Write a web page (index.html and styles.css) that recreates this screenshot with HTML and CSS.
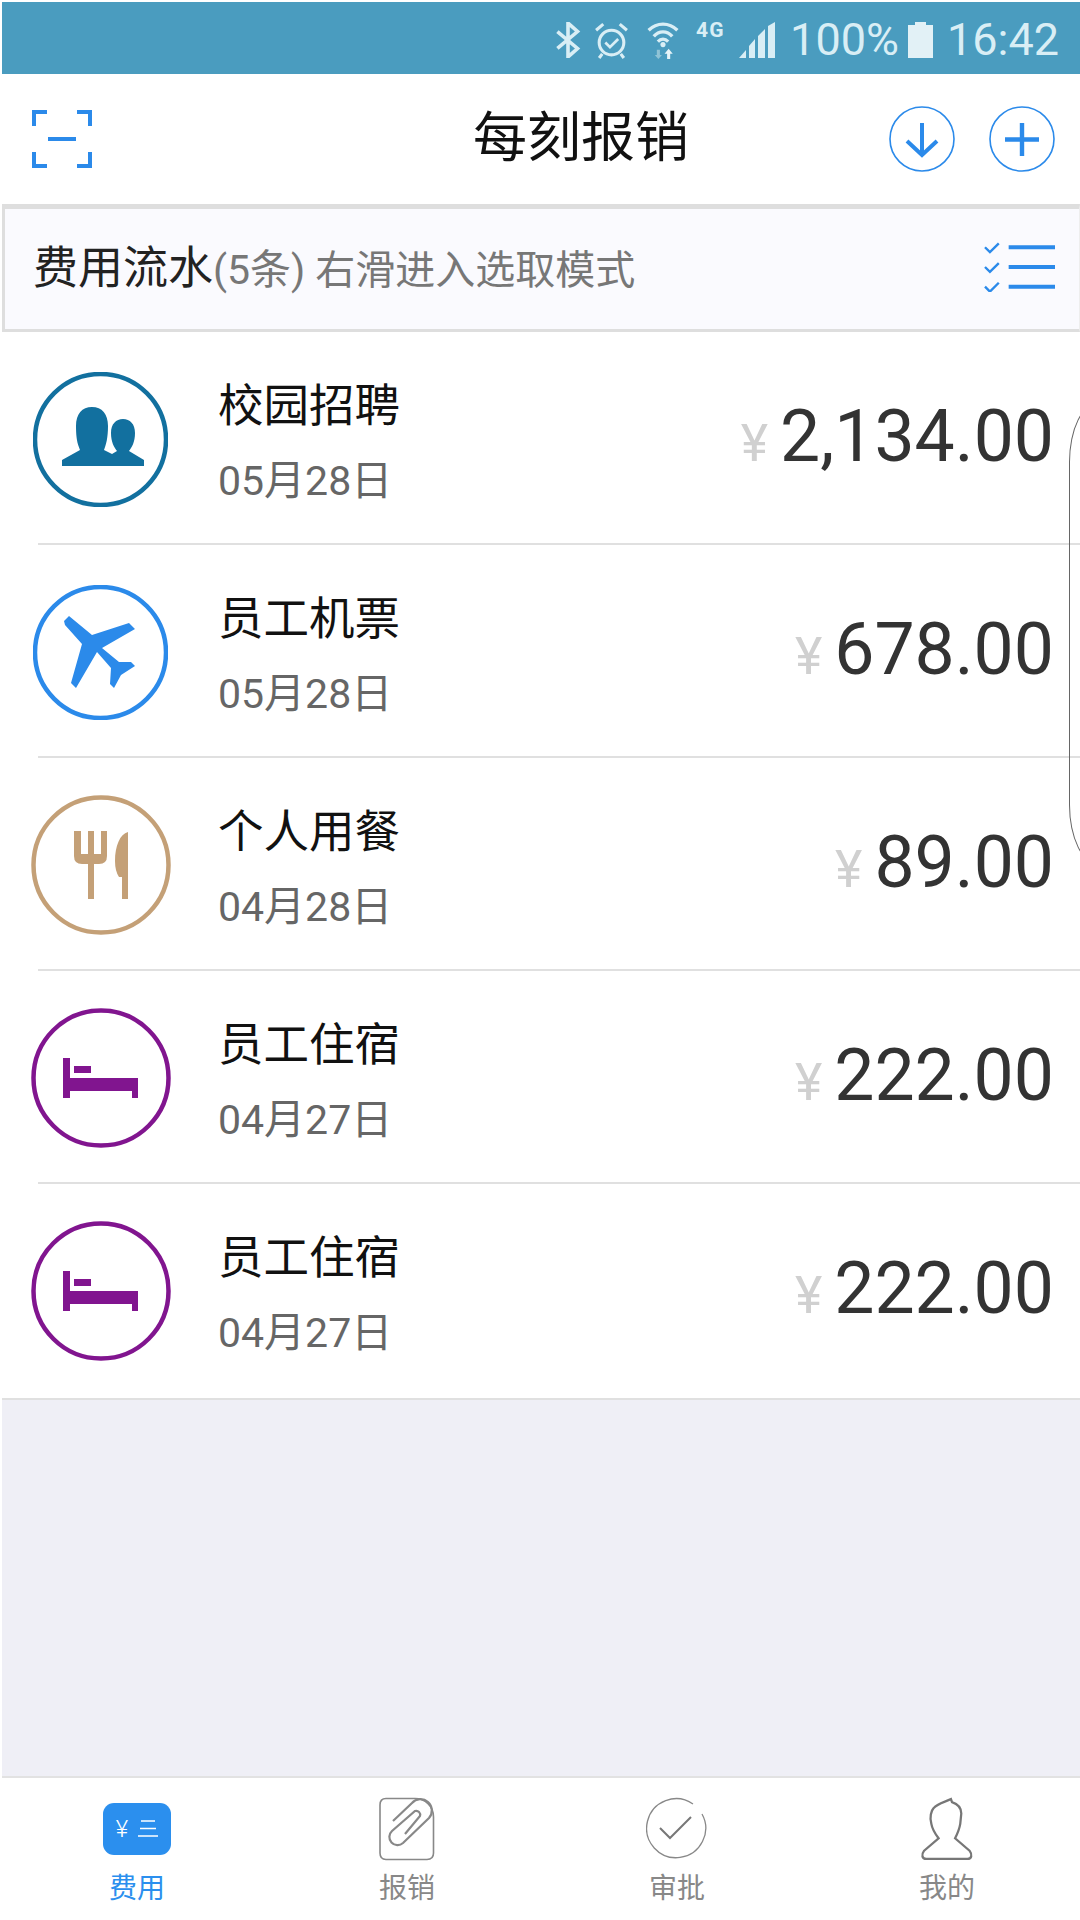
FILE: index.html
```html
<!DOCTYPE html>
<html lang="zh-CN">
<head>
<meta charset="utf-8">
<title>每刻报销</title>
<link rel="stylesheet" href="styles.css">
</head>
<body>
<div class="screen">
  <header class="status">
    <svg class="st-bt" viewBox="0 0 24 34"><path d="M2 9 21 25 12 33V1L21 9 2 25" fill="none" stroke="#d9eef5" stroke-width="3.4"/></svg>
    <svg class="st-alarm" viewBox="0 0 32 36"><circle cx="16" cy="20" r="12" fill="none" stroke="#d9eef5" stroke-width="3"/><path d="M10 20l4.500 4.500 8-8" fill="none" stroke="#d9eef5" stroke-width="2.600"/><path d="M1 8 8 2M31 8 24 2M7 31l-3 4M25 31l3 4" stroke="#d9eef5" stroke-width="3" fill="none"/></svg>
    <svg class="st-wifi" viewBox="0 0 30 37"><path d="M1 9C9 1 21 1 29 9M6 15C11 9 19 9 24 15M10 20C13 17 17 17 20 20" fill="none" stroke="#d9eef5" stroke-width="3.200"/><circle cx="15" cy="23" r="2.500" fill="#d9eef5"/><path d="M9 28h3v5h2l-3.500 4-3.500-4h2z" fill="#8fc3d6"/><path d="M19 37v-5h-2.500l4-5 4 5H22v5z" fill="#e6f4f8"/></svg>
    <span class="st-net">4G</span>
    <svg class="st-signal" viewBox="0 0 37 36"><path d="M0 36 7 28V36zM10 36V24L16 17V36zM19 36V14L26 7V36zM29 36V4L36 0V36z" fill="#d9eef5"/></svg>
    <span class="st-text st-pct">100%</span>
    <svg class="st-batt" viewBox="0 0 25 36"><path d="M7 0H18V3H25V36H0V3H7z" fill="#e2f1f6"/></svg>
    <span class="st-text st-time">16:42</span>
  </header>

  <nav class="navbar">
    <svg class="scan" viewBox="0 0 60 58"><path d="M15 2H2V16M45 2H58V16M15 56H2V42M45 56H58V42" fill="none" stroke="#2b8aea" stroke-width="4"/><path d="M16 29H44" stroke="#2b8aea" stroke-width="4"/></svg>
    <h1 class="nav-title">每刻报销</h1>
    <div class="nav-actions">
      <svg class="round-btn" viewBox="0 0 66 66"><circle cx="33" cy="33" r="32" fill="none" stroke="#2b8aea" stroke-width="1.600"/><path d="M33 17V48M18 35 33 49 48 35" fill="none" stroke="#2b8aea" stroke-width="4"/></svg>
      <svg class="round-btn" viewBox="0 0 66 66"><circle cx="33" cy="33" r="32" fill="none" stroke="#2b8aea" stroke-width="1.600"/><path d="M33 17V50M16 33.500H50" fill="none" stroke="#2b8aea" stroke-width="4.400"/></svg>
    </div>
  </nav>

  <section class="section-head">
    <p class="section-text"><span class="section-name">费用流水</span><span class="section-count">(5条)</span> 右滑进入选取模式</p>
    <svg class="check-list" viewBox="0 0 72 52"><path d="M1 7l5 5 9-9M1 27l5 5 9-9M1 47l5 5 9-9" fill="none" stroke="#2b8aea" stroke-width="2.400"/><path d="M25 7H72M25 27H72M25 47H72" stroke="#2b8aea" stroke-width="4"/></svg>
  </section>

  <main class="list">
    <article class="row">
      <div class="icon-cell"><svg class="cat cat-sm" viewBox="0 0 135 135"><circle cx="67.500" cy="67.500" r="65.500" fill="none" stroke="#12709f" stroke-width="4.500"/><path fill="#12709f" d="M29 94V88L47 78C46 74 43 71 43 54 43 42 49 35 59 35 69 35 75 42 75 54 75 66 73 73 71 78L79 82 84 79C81 75 78 70 78 61 78 52 83 47 90 47 97 47 102 52 102 61 102 70 99 75 96 79L111 88V94Z"/></svg></div>
      <div class="info"><div class="item-title">校园招聘</div><div class="item-date">05月28日</div></div>
      <div class="amount"><span class="yen">¥</span><span class="num">2,134.00</span></div>
    </article>
    <div class="divider"></div>
    <article class="row">
      <div class="icon-cell"><svg class="cat cat-sm" viewBox="0 0 135 135"><circle cx="67.500" cy="67.500" r="65.500" fill="none" stroke="#2b8aea" stroke-width="4.500"/><path fill="#2b8aea" d="M31 36 36 31 59 50 96 38 102 44 69 63 86 77H98L102 81 88 90 81 103 77 99 78 83 64 67 43 103 38 98 49 59 32 40Z"/></svg></div>
      <div class="info"><div class="item-title">员工机票</div><div class="item-date">05月28日</div></div>
      <div class="amount"><span class="yen">¥</span><span class="num">678.00</span></div>
    </article>
    <div class="divider"></div>
    <article class="row">
      <div class="icon-cell"><svg class="cat" viewBox="0 0 140 140"><circle cx="70" cy="70" r="67.500" fill="none" stroke="#c4a077" stroke-width="4.500"/><path fill="#c4a077" d="M43 36H50V59H57V36H63V59H70V36H76V61Q76 69 68 69H63V104H57V69H51Q43 69 43 61ZM97 37V104H91V82H88Q84 76 84 66C84 51 89 39 97 37Z"/></svg></div>
      <div class="info"><div class="item-title">个人用餐</div><div class="item-date">04月28日</div></div>
      <div class="amount"><span class="yen">¥</span><span class="num">89.00</span></div>
    </article>
    <div class="divider"></div>
    <article class="row">
      <div class="icon-cell"><svg class="cat" viewBox="0 0 140 140"><circle cx="70" cy="70" r="67.500" fill="none" stroke="#81158f" stroke-width="4.500"/><path fill="#81158f" d="M32 50H39V70H107V90H101V83H39V90H32ZM43 58H60V65H43Z"/></svg></div>
      <div class="info"><div class="item-title">员工住宿</div><div class="item-date">04月27日</div></div>
      <div class="amount"><span class="yen">¥</span><span class="num">222.00</span></div>
    </article>
    <div class="divider"></div>
    <article class="row">
      <div class="icon-cell"><svg class="cat" viewBox="0 0 140 140"><circle cx="70" cy="70" r="67.500" fill="none" stroke="#81158f" stroke-width="4.500"/><path fill="#81158f" d="M32 50H39V70H107V90H101V83H39V90H32ZM43 58H60V65H43Z"/></svg></div>
      <div class="info"><div class="item-title">员工住宿</div><div class="item-date">04月27日</div></div>
      <div class="amount"><span class="yen">¥</span><span class="num">222.00</span></div>
    </article>
    <div class="list-end"></div>
    <div class="edge-handle"></div>
  </main>

  <div class="empty"></div>

  <footer class="tabbar">
    <div class="tab tab-active">
      <div class="tab-icon"><div class="money-badge"><span class="money-yen">¥</span><svg class="money-lines" viewBox="0 0 20 20"><path d="M3 2H17M2 9.500H18M0 17H20" stroke="#fff" stroke-width="1.400"/></svg></div></div>
      <div class="tab-label">费用</div>
    </div>
    <div class="tab">
      <div class="tab-icon"><svg class="tab-svg" viewBox="0 0 56 64"><path d="M7 1.500H36C46 1.500 54.500 9 54.500 20V56Q54.500 62.500 48 62.500H7Q1 62.500 1 56V8Q1 1.500 7 1.500Z" fill="none" stroke="#888" stroke-width="1.600"/><path d="M14 24 33 6A11 11 0 0 1 50 21L24 46A8 8 0 0 1 13 34L36 14A4 4 0 0 1 41 19L26 37" fill="none" stroke="#888" stroke-width="2.200"/></svg></div>
      <div class="tab-label">报销</div>
    </div>
    <div class="tab">
      <div class="tab-icon"><svg class="tab-svg" viewBox="0 0 62 64"><path d="M56 17A29.500 29.500 0 1 1 47 7" fill="none" stroke="#888" stroke-width="1.300"/><path d="M14 31 24 41 45 20" fill="none" stroke="#777" stroke-width="2"/></svg></div>
      <div class="tab-label">审批</div>
    </div>
    <div class="tab">
      <div class="tab-icon"><svg class="tab-svg" viewBox="0 0 52 62"><path d="M30 2 31 5C37 7 40 10 40 16L39 26C38 32 36 36 34 40L48 52C51 56 50 60 46 60H6C2 60 1 56 4 52L18 40C15 36 12 32 11 26 9 20 11 13 13 11 17 6 24 5 30 2Z" fill="none" stroke="#777" stroke-width="2.200"/></svg></div>
      <div class="tab-label">我的</div>
    </div>
  </footer>
</div>
</body>
</html>
```
FILE: styles.css
```css
* { box-sizing: border-box; }
html, body { margin: 0; padding: 0; background: #fff; }
body {
  width: 1080px;
  height: 1920px;
  overflow: hidden;
  font-family: Roboto, "Noto Sans CJK SC", sans-serif;
}
.screen {
  display: flex;
  flex-direction: column;
  height: 1920px;
  padding: 2px 0 0 2px;
}

/* status bar */
.status {
  flex: none;
  height: 72px;
  background: #4a9cbf;
  display: flex;
  align-items: center;
  justify-content: flex-end;
  padding: 4px 21px 0 0;
  color: #d9eef5;
}
.st-bt { width: 26px; height: 36px; }
.st-alarm { width: 33px; height: 37px; margin-left: 14px; }
.st-wifi { width: 32px; height: 38px; margin-left: 19px; }
.st-net { font-size: 21px; font-weight: 700; letter-spacing: 1px; margin: -20px 0 0 17px; width: 31px; white-space: nowrap; }
.st-signal { width: 37px; height: 36px; margin-left: 12px; }
.st-text { font-size: 45px; line-height: 68px; }
.st-pct { margin-left: 14px; }
.st-batt { width: 25px; height: 36px; margin-left: 9px; }
.st-time { margin-left: 14px; }

/* nav */
.navbar {
  flex: none;
  height: 130px;
  display: grid;
  grid-template-columns: 441px 220px 1fr;
  align-items: center;
  padding-left: 30px;
}
.scan { width: 60px; height: 58px; }
.nav-title {
  margin: 0;
  font-size: 54px;
  line-height: 60px;
  font-weight: 400;
  color: #111;
  white-space: nowrap;
}
.nav-actions {
  display: flex;
  justify-content: flex-end;
  gap: 34px;
  padding-right: 25px;
}
.round-btn { width: 66px; height: 66px; }

/* section header */
.section-head {
  flex: none;
  height: 128px;
  display: flex;
  align-items: center;
  justify-content: space-between;
  background: #fafafe;
  border-top: 5px solid #dedede;
  border-bottom: 3px solid #dedede;
  border-left: 3px solid #dedede;
  border-right: 1px solid #eee;
  padding: 0 24px 0 28px;
}
.section-text {
  margin: 0;
  padding-bottom: 9px;
  font-size: 40px;
  color: #777;
  white-space: nowrap;
}
.section-name { font-size: 45px; color: #222; }
.section-count { font-size: 41px; }
.check-list { width: 71px; height: 52px; margin-bottom: 6px; }

/* rows */
.list { flex: none; position: relative; }
.row {
  height: 211px;
  display: flex;
  align-items: center;
  padding-right: 26px;
}
.icon-cell {
  width: 216px;
  flex: none;
  display: flex;
  padding: 3px 0 0 29px;
}
.cat { width: 140px; height: 140px; }
.cat-sm { width: 135px; height: 135px; margin-left: 2px; }
.info { padding-top: 10.500px; }
.item-title { font-size: 45.500px; line-height: 60px; color: #111; white-space: nowrap; }
.item-date { font-size: 41px; line-height: 56px; margin-top: 15.500px; color: #666; white-space: nowrap; }
.amount {
  margin-left: auto;
  display: flex;
  align-items: baseline;
  margin-top: -2px;
}
.yen { font-size: 52px; color: #d0d0d0; margin-right: 12px; }
.num { font-size: 71.500px; line-height: 90px; color: #333; }
.divider { height: 2px; margin-left: 36px; background: #e0e0e0; }
.list-end { height: 2px; margin-top: 3px; background: #e0e0e0; }
.edge-handle {
  position: absolute;
  left: 1067px;
  top: 70px;
  width: 60px;
  height: 463px;
  border: 1.500px solid #666;
  border-radius: 30px / 60px;
}

/* empty */
.empty { flex: 1; background: #efeff6; }

/* tabs */
.tabbar {
  flex: none;
  height: 144px;
  display: grid;
  grid-template-columns: repeat(4, 270px);
  border-top: 2px solid #e2e2e2;
}
.tab { display: flex; flex-direction: column; align-items: center; color: #888; }
.tab-active { color: #2b8fee; }
.tab-icon { height: 70px; margin-top: 16px; display: flex; align-items: center; justify-content: center; }
.tab-svg { height: 64px; display: block; }
.tab-label { font-size: 28px; line-height: 36px; margin-top: 7px; }
.money-badge {
  width: 68px;
  height: 52px;
  border-radius: 11px;
  background: #2b8fee;
  display: flex;
  align-items: center;
  justify-content: center;
  gap: 10px;
  color: #fff;
}
.money-yen { font-size: 24px; font-weight: 300; line-height: 26px; }
.money-lines { width: 20px; height: 20px; }
```
